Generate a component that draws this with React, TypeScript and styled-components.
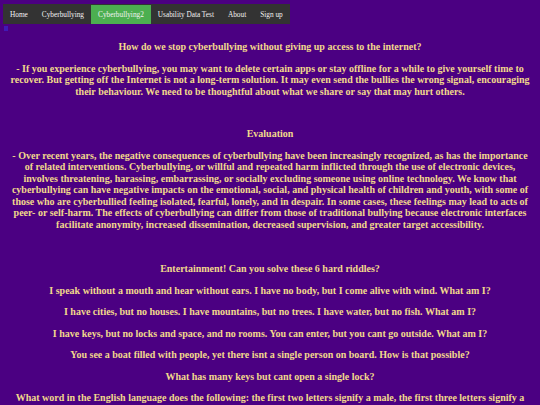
import React from "react";
import styled, { createGlobalStyle } from "styled-components";

const GlobalStyle = createGlobalStyle`
  html, body {
    margin: 0;
    padding: 0;
    background: #4b0082;
  }
  body {
    font-family: "Liberation Serif", "Times New Roman", serif;
  }
`;

const Page = styled.div`
  min-height: 405px;
  background: #4b0082;
  padding-top: 3px;
`;

const NavBar = styled.ul`
  display: inline-flex;
  align-items: flex-end;
  height: 20px;
  margin: 0 0 0 3px;
  padding: 0;
  list-style: none;
  background: #333333;
`;

const NavItem = styled.li<{ $active?: boolean }>`
  display: flex;
  align-items: center;
  height: 19px;
  padding: 0 7px;
  font-size: 7.3px;
  color: #f2f2f2;
  background: ${(p) => (p.$active ? "#4caf50" : "transparent")};
  white-space: nowrap;
`;

const Marker = styled.span`
  display: block;
  width: 4px;
  height: 5px;
  margin: 2px 0 0 4px;
  background: #3a2ad8;
  opacity: 0.6;
`;

const Content = styled.main`
  padding: 0 8px;
  color: #f2d98c;
  text-align: center;
`;

const Section = styled.section<{ $gap?: number }>`
  margin-top: ${(p) => p.$gap ?? 0}px;
`;

const Line = styled.p`
  margin: 10px 0;
  font-size: 10px;
  line-height: 11.5px;
  font-weight: bold;
`;

const navLinks = [
  "Home",
  "Cyberbullying",
  "Cyberbullying2",
  "Usability Data Test",
  "About",
  "Sign up",
];

const riddles = [
  "I speak without a mouth and hear without ears. I have no body, but I come alive with wind. What am I?",
  "I have cities, but no houses. I have mountains, but no trees. I have water, but no fish. What am I?",
  "I have keys, but no locks and space, and no rooms. You can enter, but you cant go outside. What am I?",
  "You see a boat filled with people, yet there isnt a single person on board. How is that possible?",
  "What has many keys but cant open a single lock?",
  "What word in the English language does the following: the first two letters signify a male, the first three letters signify a female, the first four letters signify a great, while the entire world signifies a great woman. What is the word?",
];

const App: React.FC = () => {
  return (
    <Page>
      <GlobalStyle />
      <NavBar>
        {navLinks.map((l) => (
          <NavItem key={l} $active={l === "Cyberbullying2"}>
            {l}
          </NavItem>
        ))}
      </NavBar>
      <Marker />
      <Content>
        <Section>
          <Line>How do we stop cyberbullying without giving up access to the internet?</Line>
          <Line>
            - If you experience cyberbullying, you may want to delete certain apps or stay offline for a
            while to give yourself time to recover. But getting off the Internet is not a long-term
            solution. It may even send the bullies the wrong signal, encouraging their behaviour. We need
            to be thoughtful about what we share or say that may hurt others.
          </Line>
        </Section>
        <Section $gap={31}>
          <Line>Evaluation</Line>
          <Line>
            - Over recent years, the negative consequences of cyberbullying have been increasingly
            recognized, as has the importance of related interventions. Cyberbullying, or willful and
            repeated harm inflicted through the use of electronic devices, involves threatening,
            harassing, embarrassing, or socially excluding someone using online technology. We know that
            cyberbullying can have negative impacts on the emotional, social, and physical health of
            children and youth, with some of those who are cyberbullied feeling isolated, fearful, lonely,
            and in despair. In some cases, these feelings may lead to acts of peer- or self-harm. The
            effects of cyberbullying can differ from those of traditional bullying because electronic
            interfaces facilitate anonymity, increased dissemination, decreased supervision, and greater
            target accessibility.
          </Line>
        </Section>
        <Section $gap={33}>
          <Line>Entertainment! Can you solve these 6 hard riddles?</Line>
          {riddles.map((r) => (
            <Line key={r}>{r}</Line>
          ))}
        </Section>
      </Content>
    </Page>
  );
};

export default App;
